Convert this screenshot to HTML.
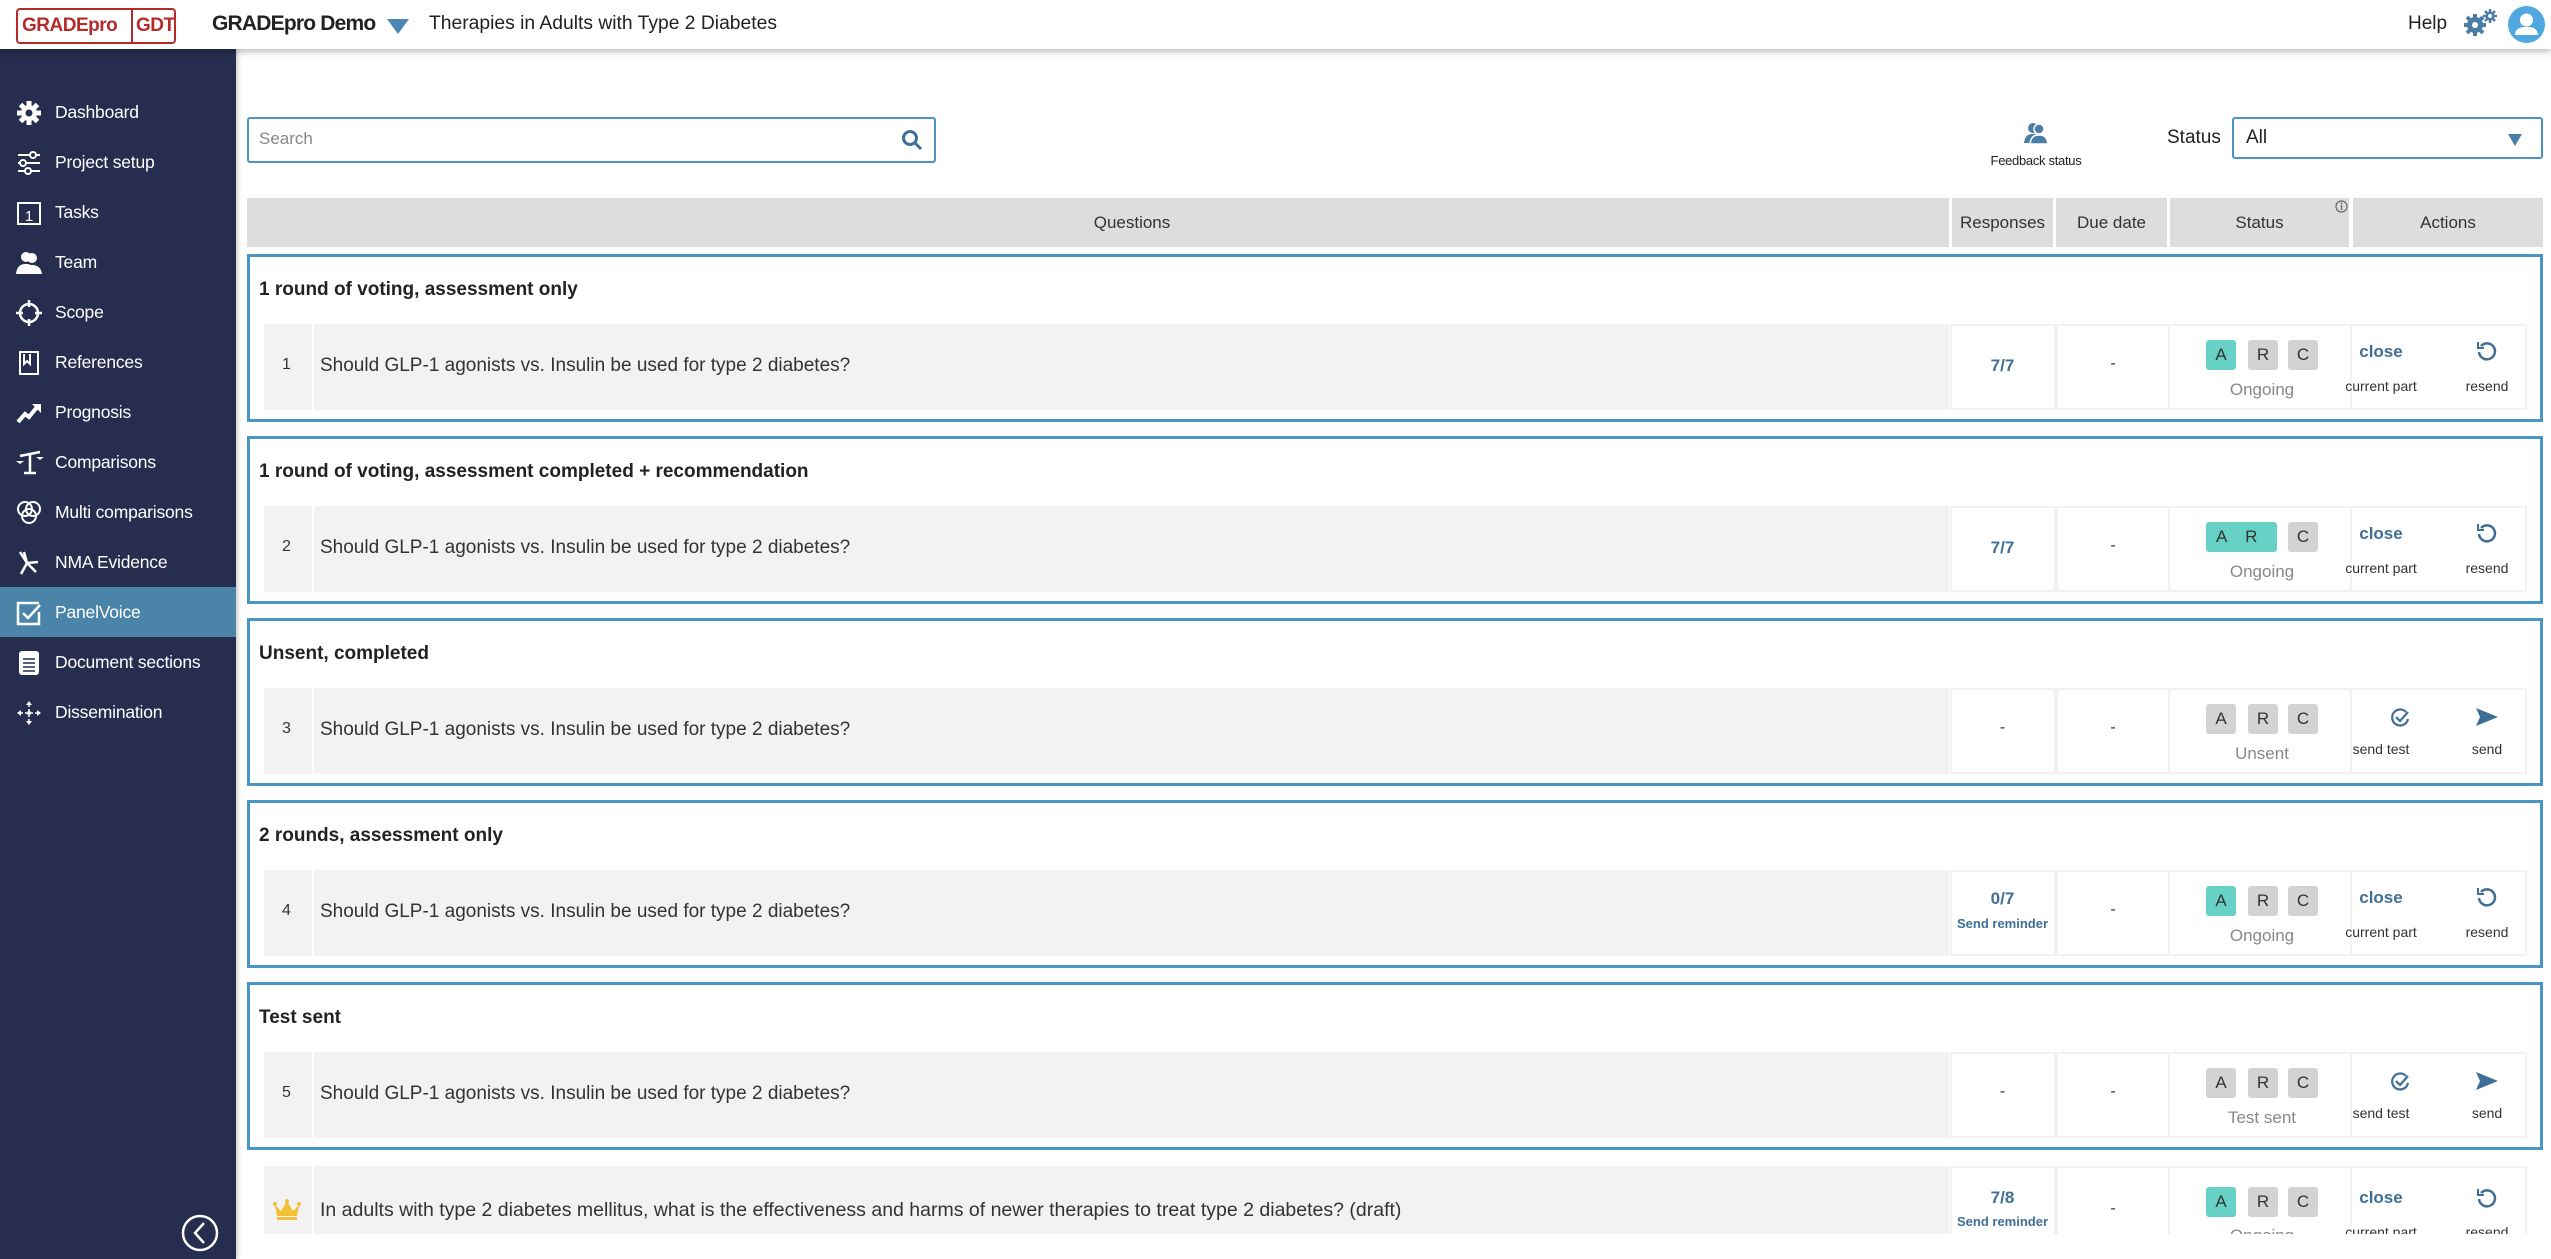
<!DOCTYPE html>
<html><head><meta charset="utf-8">
<style>
*{box-sizing:border-box;margin:0;padding:0}
body{width:2551px;height:1259px;overflow:hidden;background:#fff;font-family:"Liberation Sans",sans-serif;color:#333;position:relative}
.a{position:absolute}
#hdr{left:0;top:0;width:2551px;height:49px;background:#fff;box-shadow:0 3px 6px rgba(0,0,0,.25);z-index:5}
#side{left:0;top:49px;width:236px;height:1210px;background:#262d4f;z-index:4;box-shadow:2px 0 4px rgba(0,0,0,.2)}
.nav{position:absolute;left:0;width:236px;height:50px;color:#fff;font-size:17.5px;line-height:50px}
.nav span{position:absolute;left:55px;letter-spacing:-.2px}
.nav svg{position:absolute;left:16px;top:13px}
.grp{position:absolute;left:247px;width:2296px;height:168px;border:3px solid #4796c4;background:#fff}
.gt{position:absolute;left:259px;font-weight:bold;font-size:19px;color:#222}
.c{position:absolute;height:86px}
.gray{background:#f2f2f2}
.wc{background:#fff;border:2px solid #f2f2f2}
.txt{font-size:19px;color:#333}
.chip{position:absolute;width:30px;height:30px;border-radius:3px;background:#d3d3d3;font-size:17px;text-align:center;line-height:30px;color:#333}
.t{background:#66d1c4}
.st{position:absolute;width:180px;text-align:center;font-size:17px;color:#888}
.bl{color:#3f6f97;font-weight:bold}
.sm{font-size:14px;color:#333}
.hc{position:absolute;top:198px;height:49px;background:#ddd;font-size:17px;line-height:49px;text-align:center;color:#333}
.ctr{position:absolute;text-align:center}
</style></head><body>
<div id="hdr" class="a">
  <div class="a" style="left:16px;top:8px;width:160px;height:36px;border:2px solid #b52a2a;border-radius:4px;color:#b52a2a;font-weight:bold;font-size:19px;line-height:32px;letter-spacing:-.5px">
    <span class="a" style="left:4px">GRADEpro</span>
    <span class="a" style="left:113px;top:-2px;width:2px;height:36px;background:#b52a2a"></span>
    <span class="a" style="left:118px">GDT</span>
  </div>
  <div class="a" style="left:212px;top:12px;font-weight:bold;font-size:21px;color:#222;letter-spacing:-.8px">GRADEpro Demo</div>
  <svg class="a" style="left:387px;top:19px" width="22" height="16"><path d="M0 0H22L11 15Z" fill="#4a88b3"/></svg>
  <div class="a" style="left:429px;top:13px;font-size:19.3px;color:#222">Therapies in Adults with Type 2 Diabetes</div>
  <div class="a" style="left:2408px;top:13px;font-size:19px;color:#222">Help</div>
  <svg class="a" style="left:2462px;top:8px" width="36" height="30" viewBox="0 0 36 30">
    <g fill="#4a7ea6"><circle cx="13" cy="17" r="8"/><g stroke="#4a7ea6" stroke-width="4"><path d="M13 6V28M2 17H24M5 9L21 25M21 9L5 25"/></g><circle cx="13" cy="17" r="3" fill="#fff"/>
    <circle cx="28" cy="8" r="4.5"/><g stroke="#4a7ea6" stroke-width="2.5"><path d="M28 1V15M21 8H35M23 3L33 13M33 3L23 13"/></g><circle cx="28" cy="8" r="2" fill="#fff"/></g>
  </svg>
  <svg class="a" style="left:2508px;top:6px" width="37" height="37"><circle cx="18.5" cy="18.5" r="18.5" fill="#4fa8e0"/><circle cx="18.5" cy="14" r="6.5" fill="#fff"/><path d="M7 29C8 22 12 21 18.5 21S29 22 30 29Z" fill="#fff"/></svg>
</div>

<div id="side" class="a">
  <div class="nav" style="top:38px"><svg width="26" height="26" viewBox="0 0 26 26"><g fill="#fff"><circle cx="13" cy="13" r="8"/><g stroke="#fff" stroke-width="5"><path d="M13 1V25M1 13H25M4.5 4.5L21.5 21.5M21.5 4.5L4.5 21.5"/></g></g><circle cx="13" cy="13" r="3.5" fill="#262d4f"/></svg><span>Dashboard</span></div>
  <div class="nav" style="top:88px"><svg width="26" height="26" viewBox="0 0 26 26" stroke="#fff" stroke-width="2" fill="#262d4f"><path d="M2 5H24M2 13H24M2 21H24"/><circle cx="17" cy="5" r="3"/><circle cx="7" cy="13" r="3"/><circle cx="12" cy="21" r="3"/></svg><span>Project setup</span></div>
  <div class="nav" style="top:138px"><svg width="26" height="26" viewBox="0 0 26 26"><rect x="2" y="3" width="22" height="21" fill="none" stroke="#fff" stroke-width="2"/><text x="13" y="21" font-size="15" fill="#fff" text-anchor="middle" font-family="Liberation Sans">1</text></svg><span>Tasks</span></div>
  <div class="nav" style="top:188px"><svg width="26" height="26" viewBox="0 0 26 26" fill="#fff"><circle cx="10" cy="7" r="5"/><circle cx="16" cy="8" r="5"/><path d="M0 24C1 15 6 14 10 14S18 15 19 24Z"/><path d="M8 24C9 16 13 15 16 15S25 16 26 24Z"/></svg><span>Team</span></div>
  <div class="nav" style="top:238px"><svg width="26" height="26" viewBox="0 0 26 26" fill="none" stroke="#fff" stroke-width="2.5"><circle cx="13" cy="13" r="9"/><path d="M13 0V7M13 19V26M0 13H7M19 13H26"/></svg><span>Scope</span></div>
  <div class="nav" style="top:288px"><svg width="26" height="26" viewBox="0 0 26 26" fill="none" stroke="#fff" stroke-width="2"><rect x="4" y="2" width="18" height="22"/><path d="M8 4V14L11 11L14 14V4"/></svg><span>References</span></div>
  <div class="nav" style="top:338px"><svg width="26" height="26" viewBox="0 0 26 26"><path d="M2 22L9 14L13 17L21 7" stroke="#fff" stroke-width="4" fill="none"/><path d="M16 4H25V13Z" fill="#fff"/></svg><span>Prognosis</span></div>
  <div class="nav" style="top:388px"><svg width="28" height="26" viewBox="0 0 28 26" fill="#fff"><path d="M4 6L24 2" stroke="#fff" stroke-width="2.5"/><path d="M14 4V22M8 23H20" stroke="#fff" stroke-width="2.5"/><path d="M0 11H8L4 14Z"/><path d="M20 7H28L24 10Z"/></svg><span>Comparisons</span></div>
  <div class="nav" style="top:438px"><svg width="26" height="26" viewBox="0 0 26 26" fill="none" stroke="#fff" stroke-width="2"><circle cx="9" cy="9" r="7"/><circle cx="17" cy="9" r="7"/><circle cx="13" cy="16" r="7"/></svg><span>Multi comparisons</span></div>
  <div class="nav" style="top:488px"><svg width="26" height="26" viewBox="0 0 26 26" stroke="#fff" stroke-width="2.5" fill="none"><path d="M4 2L11 13L5 24M11 13L20 22M11 13L22 12M11 13L8 2"/></svg><span>NMA Evidence</span></div>
  <div class="nav" style="top:538px;background:#4a84a8"><svg width="26" height="26" viewBox="0 0 26 26" fill="none" stroke="#fff" stroke-width="2.5"><path d="M23 3H2V24H23V12"/><path d="M7 13L12 18L24 5"/></svg><span>PanelVoice</span></div>
  <div class="nav" style="top:588px"><svg width="26" height="26" viewBox="0 0 26 26"><rect x="3" y="1" width="20" height="24" rx="3" fill="#fff"/><path d="M7 9H19M7 13H19M7 17H19M7 21H19" stroke="#262d4f" stroke-width="1.5"/></svg><span>Document sections</span></div>
  <div class="nav" style="top:638px"><svg width="26" height="26" viewBox="0 0 26 26" fill="#fff"><path d="M13 1L16 5H10Z"/><path d="M13 25L16 21H10Z"/><path d="M1 13L5 10V16Z"/><path d="M25 13L21 10V16Z"/><circle cx="13" cy="13" r="2"/><path d="M13 5V11M13 15V21M5 13H11M15 13H21" stroke="#fff" stroke-width="1.5" stroke-dasharray="2 2"/></svg><span>Dissemination</span></div>
  <svg class="a" style="left:181px;top:1165px" width="38" height="38"><circle cx="19" cy="19" r="17" fill="none" stroke="#fff" stroke-width="2.5"/><path d="M23 9L14 19L23 29" fill="none" stroke="#fff" stroke-width="2.5"/></svg>
</div>

<!-- toolbar -->
<div class="a" style="left:247px;top:117px;width:689px;height:46px;border:2px solid #4a95c4;border-radius:3px"></div>
<div class="a" style="left:259px;top:129px;font-size:17px;color:#888">Search</div>
<svg class="a" style="left:901px;top:129px" width="22" height="22" fill="none" stroke="#3f6f97" stroke-width="3"><circle cx="9" cy="9" r="6.5"/><path d="M14 14L20 20"/></svg>
<svg class="a" style="left:2024px;top:122px" width="24" height="22" viewBox="0 0 24 22" fill="#4a7ea6"><circle cx="9" cy="6" r="5"/><path d="M0 21C1 13 5 12 9 12S14 13 15 16V21Z"/><circle cx="15" cy="7" r="5" stroke="#fff" stroke-width="1.5"/><path d="M6 22C7 14 11 13 15 13S23 14 24 22Z" stroke="#fff" stroke-width="1.5"/></svg>
<div class="a" style="left:1980px;top:153px;width:112px;text-align:center;font-size:13px;color:#222;letter-spacing:-.3px">Feedback status</div>
<div class="a" style="left:2167px;top:127px;font-size:19px;color:#222">Status</div>
<div class="a" style="left:2232px;top:117px;width:311px;height:42px;border:2px solid #4a95c4;border-radius:3px;background:#fff"></div>
<div class="a" style="left:2246px;top:127px;font-size:19px;color:#222">All</div>
<svg class="a" style="left:2508px;top:134px" width="14" height="12"><path d="M0 0H14L7 12Z" fill="#4a7ea6"/></svg>

<!-- table header -->
<div class="hc" style="left:247px;width:1702px;padding-left:68px">Questions</div>
<div class="hc" style="left:1952px;width:101px">Responses</div>
<div class="hc" style="left:2056px;width:111px">Due date</div>
<div class="hc" style="left:2170px;width:179px">Status</div>
<svg class="a" style="left:2335px;top:200px" width="13" height="13"><circle cx="6.5" cy="6.5" r="5.5" fill="none" stroke="#666" stroke-width="1.2"/><path d="M6.5 5V10" stroke="#666" stroke-width="1.3"/><circle cx="6.5" cy="3.5" r=".9" fill="#666"/></svg>
<div class="hc" style="left:2353px;width:190px">Actions</div>

<!-- groups -->
<div class="grp" style="top:254px"></div><div class="gt" style="top:279px">1 round of voting, assessment only</div>
<div class="grp" style="top:436px"></div><div class="gt" style="top:461px">1 round of voting, assessment completed + recommendation</div>
<div class="grp" style="top:618px"></div><div class="gt" style="top:643px">Unsent, completed</div>
<div class="grp" style="top:800px"></div><div class="gt" style="top:825px">2 rounds, assessment only</div>
<div class="grp" style="top:982px"></div><div class="gt" style="top:1007px">Test sent</div>

<!-- row 1 -->
<div class="c gray" style="left:264px;top:324px;width:48px"></div><div class="c gray" style="left:314px;top:324px;width:1635px"></div>
<div class="a txt" style="left:282px;top:356px;font-size:16px">1</div><div class="a txt" style="left:320px;top:355px">Should GLP-1 agonists vs. Insulin be used for type 2 diabetes?</div>
<div class="c wc" style="left:1950px;top:324px;width:106px"></div><div class="c wc" style="left:2056px;top:324px;width:114px"></div><div class="c wc" style="left:2168px;top:324px;width:184px"></div><div class="c wc" style="left:2350px;top:324px;width:177px"></div>
<div class="ctr bl" style="left:1952px;top:356px;width:101px;font-size:17px">7/7</div><div class="ctr" style="left:2058px;top:355px;width:110px">-</div>
<div class="chip t" style="left:2206px;top:340px">A</div><div class="chip" style="left:2248px;top:340px">R</div><div class="chip" style="left:2288px;top:340px">C</div>
<div class="st" style="left:2172px;top:380px">Ongoing</div>
<div class="ctr bl" style="left:2341px;top:342px;width:80px;font-size:17px">close</div><div class="ctr sm" style="left:2331px;top:378px;width:100px">current part</div>
<svg class="a" style="left:2476px;top:340px" width="22" height="22" fill="none" stroke="#3f6f97" stroke-width="2.5"><path d="M5 6A8 8 0 1 1 3 12"/><path d="M2 2V8H8" stroke-width="2"/></svg><div class="ctr sm" style="left:2447px;top:378px;width:80px">resend</div>

<!-- row 2 -->
<div class="c gray" style="left:264px;top:506px;width:48px"></div><div class="c gray" style="left:314px;top:506px;width:1635px"></div>
<div class="a txt" style="left:282px;top:538px;font-size:16px">2</div><div class="a txt" style="left:320px;top:537px">Should GLP-1 agonists vs. Insulin be used for type 2 diabetes?</div>
<div class="c wc" style="left:1950px;top:506px;width:106px"></div><div class="c wc" style="left:2056px;top:506px;width:114px"></div><div class="c wc" style="left:2168px;top:506px;width:184px"></div><div class="c wc" style="left:2350px;top:506px;width:177px"></div>
<div class="ctr bl" style="left:1952px;top:538px;width:101px;font-size:17px">7/7</div><div class="ctr" style="left:2058px;top:537px;width:110px">-</div>
<div class="chip t" style="left:2206px;top:522px;width:71px;text-align:left;padding-left:10px;word-spacing:14px">A R</div><div class="chip" style="left:2288px;top:522px">C</div>
<div class="st" style="left:2172px;top:562px">Ongoing</div>
<div class="ctr bl" style="left:2341px;top:524px;width:80px;font-size:17px">close</div><div class="ctr sm" style="left:2331px;top:560px;width:100px">current part</div>
<svg class="a" style="left:2476px;top:522px" width="22" height="22" fill="none" stroke="#3f6f97" stroke-width="2.5"><path d="M5 6A8 8 0 1 1 3 12"/><path d="M2 2V8H8" stroke-width="2"/></svg><div class="ctr sm" style="left:2447px;top:560px;width:80px">resend</div>

<!-- row 3 -->
<div class="c gray" style="left:264px;top:688px;width:48px"></div><div class="c gray" style="left:314px;top:688px;width:1635px"></div>
<div class="a txt" style="left:282px;top:720px;font-size:16px">3</div><div class="a txt" style="left:320px;top:719px">Should GLP-1 agonists vs. Insulin be used for type 2 diabetes?</div>
<div class="c wc" style="left:1950px;top:688px;width:106px"></div><div class="c wc" style="left:2056px;top:688px;width:114px"></div><div class="c wc" style="left:2168px;top:688px;width:184px"></div><div class="c wc" style="left:2350px;top:688px;width:177px"></div>
<div class="ctr" style="left:1952px;top:719px;width:101px">-</div><div class="ctr" style="left:2058px;top:719px;width:110px">-</div>
<div class="chip" style="left:2206px;top:704px">A</div><div class="chip" style="left:2248px;top:704px">R</div><div class="chip" style="left:2288px;top:704px">C</div>
<div class="st" style="left:2172px;top:744px">Unsent</div>
<svg class="a" style="left:2390px;top:707px" width="20" height="20" fill="none" stroke="#3f6f97" stroke-width="2.2"><path d="M16 5A8 8 0 1 0 18 12"/><path d="M6 10L10 14L18 5"/></svg><div class="ctr sm" style="left:2331px;top:741px;width:100px">send test</div>
<svg class="a" style="left:2476px;top:708px" width="22" height="18"><path d="M0 0L22 9L0 18L4 9Z" fill="#3f6f97"/></svg><div class="ctr sm" style="left:2447px;top:741px;width:80px">send</div>

<!-- row 4 -->
<div class="c gray" style="left:264px;top:870px;width:48px"></div><div class="c gray" style="left:314px;top:870px;width:1635px"></div>
<div class="a txt" style="left:282px;top:902px;font-size:16px">4</div><div class="a txt" style="left:320px;top:901px">Should GLP-1 agonists vs. Insulin be used for type 2 diabetes?</div>
<div class="c wc" style="left:1950px;top:870px;width:106px"></div><div class="c wc" style="left:2056px;top:870px;width:114px"></div><div class="c wc" style="left:2168px;top:870px;width:184px"></div><div class="c wc" style="left:2350px;top:870px;width:177px"></div>
<div class="ctr bl" style="left:1952px;top:889px;width:101px;font-size:17px">0/7</div><div class="ctr bl" style="left:1952px;top:916px;width:101px;font-size:13px">Send reminder</div><div class="ctr" style="left:2058px;top:901px;width:110px">-</div>
<div class="chip t" style="left:2206px;top:886px">A</div><div class="chip" style="left:2248px;top:886px">R</div><div class="chip" style="left:2288px;top:886px">C</div>
<div class="st" style="left:2172px;top:926px">Ongoing</div>
<div class="ctr bl" style="left:2341px;top:888px;width:80px;font-size:17px">close</div><div class="ctr sm" style="left:2331px;top:924px;width:100px">current part</div>
<svg class="a" style="left:2476px;top:886px" width="22" height="22" fill="none" stroke="#3f6f97" stroke-width="2.5"><path d="M5 6A8 8 0 1 1 3 12"/><path d="M2 2V8H8" stroke-width="2"/></svg><div class="ctr sm" style="left:2447px;top:924px;width:80px">resend</div>

<!-- row 5 -->
<div class="c gray" style="left:264px;top:1052px;width:48px"></div><div class="c gray" style="left:314px;top:1052px;width:1635px"></div>
<div class="a txt" style="left:282px;top:1084px;font-size:16px">5</div><div class="a txt" style="left:320px;top:1083px">Should GLP-1 agonists vs. Insulin be used for type 2 diabetes?</div>
<div class="c wc" style="left:1950px;top:1052px;width:106px"></div><div class="c wc" style="left:2056px;top:1052px;width:114px"></div><div class="c wc" style="left:2168px;top:1052px;width:184px"></div><div class="c wc" style="left:2350px;top:1052px;width:177px"></div>
<div class="ctr" style="left:1952px;top:1083px;width:101px">-</div><div class="ctr" style="left:2058px;top:1083px;width:110px">-</div>
<div class="chip" style="left:2206px;top:1068px">A</div><div class="chip" style="left:2248px;top:1068px">R</div><div class="chip" style="left:2288px;top:1068px">C</div>
<div class="st" style="left:2172px;top:1108px">Test sent</div>
<svg class="a" style="left:2390px;top:1071px" width="20" height="20" fill="none" stroke="#3f6f97" stroke-width="2.2"><path d="M16 5A8 8 0 1 0 18 12"/><path d="M6 10L10 14L18 5"/></svg><div class="ctr sm" style="left:2331px;top:1105px;width:100px">send test</div>
<svg class="a" style="left:2476px;top:1072px" width="22" height="18"><path d="M0 0L22 9L0 18L4 9Z" fill="#3f6f97"/></svg><div class="ctr sm" style="left:2447px;top:1105px;width:80px">send</div>

<!-- last row (cut) -->
<div class="a" style="left:247px;top:1166px;width:2300px;height:68px;overflow:hidden">
  <div class="c gray" style="left:17px;top:0;width:48px;height:68px"></div><div class="c gray" style="left:67px;top:0;width:1635px;height:68px"></div>
  <svg class="a" style="left:26px;top:33px" width="28" height="22" viewBox="0 0 28 22" fill="#f2c037"><path d="M2 6L8 12L14 2L20 12L26 6L24 17H4Z"/><rect x="4" y="18" width="20" height="3"/><circle cx="14" cy="2" r="2"/><circle cx="2" cy="5" r="2"/><circle cx="26" cy="5" r="2"/></svg>
  <div class="a txt" style="left:73px;top:33px;font-size:19.5px">In adults with type 2 diabetes mellitus, what is the effectiveness and harms of newer therapies to treat type 2 diabetes? (draft)</div>
  <div class="c wc" style="left:1703px;top:0;width:106px;height:80px"></div><div class="c wc" style="left:1809px;top:0;width:114px;height:80px"></div><div class="c wc" style="left:1921px;top:0;width:184px;height:80px"></div><div class="c wc" style="left:2103px;top:0;width:177px;height:80px"></div>
  <div class="ctr bl" style="left:1705px;top:22px;width:101px;font-size:17px">7/8</div><div class="ctr bl" style="left:1705px;top:48px;width:101px;font-size:13px">Send reminder</div><div class="ctr" style="left:1811px;top:34px;width:110px">-</div>
  <div class="chip t" style="left:1959px;top:21px">A</div><div class="chip" style="left:2001px;top:21px">R</div><div class="chip" style="left:2041px;top:21px">C</div>
  <div class="st" style="left:1925px;top:60px">Ongoing</div>
  <div class="ctr bl" style="left:2094px;top:22px;width:80px;font-size:17px">close</div><div class="ctr sm" style="left:2084px;top:58px;width:100px">current part</div>
  <svg class="a" style="left:2229px;top:21px" width="22" height="22" fill="none" stroke="#3f6f97" stroke-width="2.5"><path d="M5 6A8 8 0 1 1 3 12"/><path d="M2 2V8H8" stroke-width="2"/></svg><div class="ctr sm" style="left:2200px;top:58px;width:80px">resend</div>
</div>
</body></html>
